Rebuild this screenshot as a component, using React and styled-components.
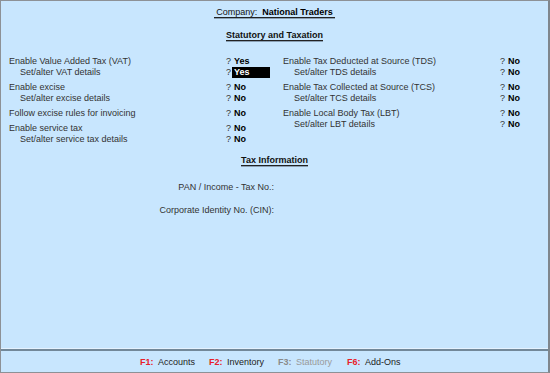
import React from "react";
import styled, { createGlobalStyle } from "styled-components";

const Global = createGlobalStyle`
  html, body { margin: 0; padding: 0; background: #c8e6fe; }
  body { font-family: "Liberation Sans", Arial, sans-serif; }
  * { box-sizing: border-box; }
`;

const Frame = styled.div`
  width: 550px;
  height: 373px;
  display: flex;
  flex-direction: column;
  background: #c8e6fe;
  border-top: 1px solid #8d9196;
  border-left: 1px solid #8d9196;
  border-right: 2px solid #7f868d;
  border-bottom: 1px solid #8d9196;
  font-size: 9px;
  color: #333;
`;

const Main = styled.div`
  flex: 1;
  display: flex;
  flex-direction: column;
`;

const Center = styled.div`
  display: flex;
  justify-content: center;
  margin-top: ${(p) => p.$mt}px;
`;

const Heading = styled.div`
  line-height: 9px;
  font-weight: ${(p) => (p.$bold ? 700 : 400)};
  color: #111;
  padding: 0 ${(p) => p.$px || 0}px;
  border-bottom: 1px solid #222;
  box-shadow: 0 1px 0 #8aa0b4;
  white-space: pre;
`;

const Strong = styled.span`
  font-weight: 700;
  color: #000;
`;

const Columns = styled.div`
  display: grid;
  grid-template-columns: 274px 1fr;
  padding-left: 8px;
  margin-top: 15px;
`;

const Column = styled.div`
  display: flex;
  flex-direction: column;
  gap: 4px;
`;

const Group = styled.div`
  display: flex;
  flex-direction: column;
`;

const Row = styled.div`
  display: flex;
  line-height: 11px;
  height: 11px;
`;

const Label = styled.span`
  width: 217px;
  padding-left: ${(p) => (p.$sub ? 11 : 0)}px;
  white-space: nowrap;
`;

const Q = styled.span`
  width: 6px;
  color: #333;
`;

const Value = styled.span`
  width: 38px;
  padding-left: 2px;
  font-weight: 700;
  color: ${(p) => (p.$active ? "#fff" : "#000")};
  background: ${(p) => (p.$active ? "#000" : "transparent")};
`;

const Form = styled.div`
  display: flex;
  flex-direction: column;
  gap: 12px;
  margin-top: 16px;
`;

const FormRow = styled.div`
  display: flex;
  line-height: 11px;
`;

const FormLabel = styled.span`
  width: 273px;
  text-align: right;
  white-space: nowrap;
`;

const Separator = styled.div`
  border-top: 1px solid #e4f2ff;
  border-bottom: 2px solid #728899;
`;

const Footer = styled.div`
  height: 21px;
  display: flex;
  align-items: center;
  justify-content: center;
  padding-left: 7px;
`;

const FKey = styled.div`
  width: 69px;
  display: flex;
  white-space: nowrap;
  color: ${(p) => (p.$disabled ? "#9a9a9a" : "#222")};
`;

const Key = styled.span`
  width: 18px;
  font-weight: 700;
  color: ${(p) => (p.$disabled ? "#8a8a8a" : "#e8202a")};
`;

const left = [
  [
    ["Enable Value Added Tax (VAT)", "Yes"],
    ["Set/alter VAT details", "Yes", true, true],
  ],
  [
    ["Enable excise", "No"],
    ["Set/alter excise details", "No", true],
  ],
  [["Follow excise rules for invoicing", "No"]],
  [
    ["Enable service tax", "No"],
    ["Set/alter service tax details", "No", true],
  ],
];

const right = [
  [
    ["Enable Tax Deducted at Source (TDS)", "No"],
    ["Set/alter TDS details", "No", true],
  ],
  [
    ["Enable Tax Collected at Source (TCS)", "No"],
    ["Set/alter TCS details", "No", true],
  ],
  [
    ["Enable Local Body Tax (LBT)", "No"],
    ["Set/alter LBT details", "No", true],
  ],
];

const keys = [
  ["F1:", "Accounts"],
  ["F2:", "Inventory"],
  ["F3:", "Statutory", true],
  ["F6:", "Add-Ons"],
];

function renderColumn(groups) {
  return (
    <Column>
      {groups.map((g, i) => (
        <Group key={i}>
          {g.map(([label, value, sub, active]) => (
            <Row key={label}>
              <Label $sub={sub}>{label}</Label>
              <Q>?</Q>
              <Value $active={active}>{value}</Value>
            </Row>
          ))}
        </Group>
      ))}
    </Column>
  );
}

export default function App() {
  return (
    <>
      <Global />
      <Frame>
        <Main>
          <Center $mt={7}>
            <Heading $px={2}>
              {"Company:  "}
              <Strong>National Traders</Strong>
            </Heading>
          </Center>
          <Center $mt={13}>
            <Heading $bold>Statutory and Taxation</Heading>
          </Center>
          <Columns>
            {renderColumn(left)}
            {renderColumn(right)}
          </Columns>
          <Center $mt={11}>
            <Heading $bold>Tax Information</Heading>
          </Center>
          <Form>
            <FormRow>
              <FormLabel>PAN / Income - Tax No.:</FormLabel>
            </FormRow>
            <FormRow>
              <FormLabel>Corporate Identity No. (CIN):</FormLabel>
            </FormRow>
          </Form>
        </Main>
        <Separator />
        <Footer>
          {keys.map(([k, l, d]) => (
            <FKey key={k} $disabled={d}>
              <Key $disabled={d}>{k}</Key>
              {l}
            </FKey>
          ))}
        </Footer>
      </Frame>
    </>
  );
}
